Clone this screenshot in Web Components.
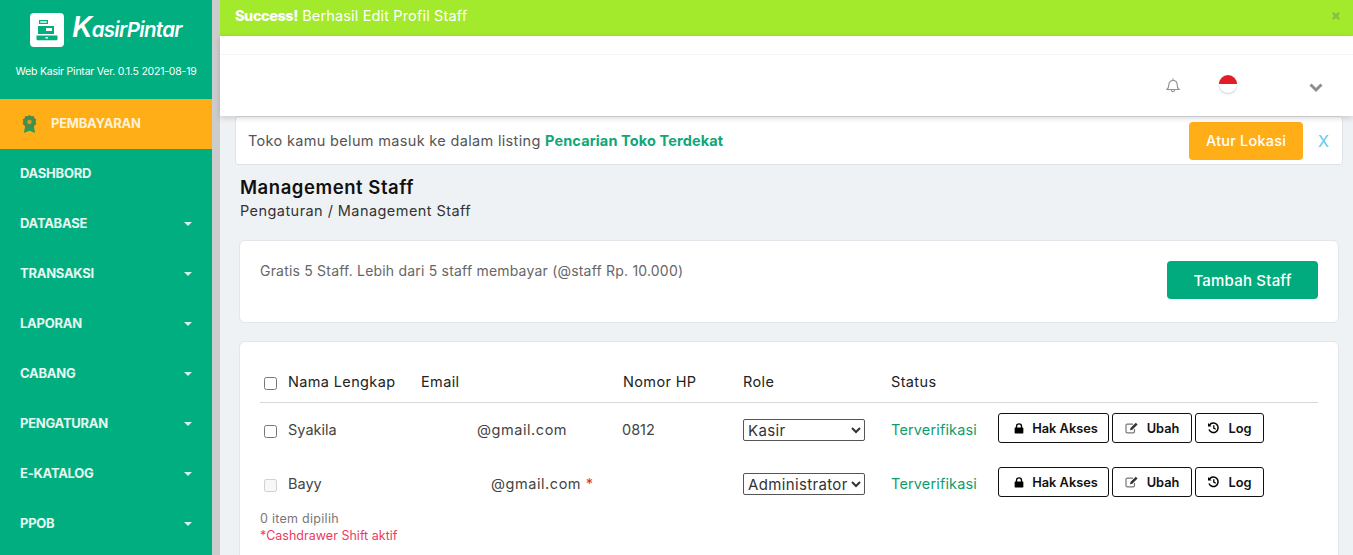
<!DOCTYPE html>
<html>
<head>
<meta charset="utf-8">
<title>Management Staff</title>
<style>
  html, body { margin: 0; height: 555px; overflow: hidden; background: #eff2f5; }
  body { font-family: Inter, "Open Sans", sans-serif; color: #222; }
</style>
</head>
<body>
<kp-app>
  <kp-sidebar slot="side">
    <kp-nav-item active label="PEMBAYARAN"></kp-nav-item>
    <kp-nav-item label="DASHBORD" plain></kp-nav-item>
    <kp-nav-item label="DATABASE"></kp-nav-item>
    <kp-nav-item label="TRANSAKSI"></kp-nav-item>
    <kp-nav-item label="LAPORAN"></kp-nav-item>
    <kp-nav-item label="CABANG"></kp-nav-item>
    <kp-nav-item label="PENGATURAN"></kp-nav-item>
    <kp-nav-item label="E-KATALOG"></kp-nav-item>
    <kp-nav-item label="PPOB"></kp-nav-item>
  </kp-sidebar>
  <kp-alert><b>Success!</b> Berhasil Edit Profil Staff</kp-alert>
  <kp-topbar></kp-topbar>
  <kp-notice>Toko kamu belum masuk ke dalam listing <b>Pencarian Toko Terdekat</b></kp-notice>
  <kp-heading title="Management Staff" crumb="Pengaturan / Management Staff"></kp-heading>
  <kp-card>
    <kp-info>Gratis 5 Staff. Lebih dari 5 staff membayar (@staff Rp. 10.000)</kp-info>
  </kp-card>
  <kp-card>
    <kp-staff-table>
      <kp-staff-row name="Syakila" email="@gmail.com" pad="56" phone="0812" role="Kasir"></kp-staff-row>
      <kp-staff-row name="Bayy" email="@gmail.com" pad="70" star disabled role="Administrator"></kp-staff-row>
    </kp-staff-table>
  </kp-card>
</kp-app>

<script>
  const icons = {
    lock: '<svg width="10" height="11" viewBox="0 0 11 12"><path fill="#000" d="M2 5V3.6a3.5 3.5 0 0 1 7 0V5h.6c.4 0 .7.3.7.7v5.1c0 .4-.3.7-.7.7H1.400c-.4 0-.7-.3-.7-.7V5.700c0-.4.3-.7.7-.7zm1.500 0h4V3.600a2 2 0 0 0-4 0z"/></svg>',
    edit: '<svg width="14" height="12" viewBox="0 0 14 12"><path fill="none" stroke="#777" stroke-width="1.200" d="M9.500 7v2.500c0 .8-.5 1.300-1.300 1.300H2.300c-.8 0-1.300-.5-1.300-1.300V3.500c0-.8.5-1.300 1.300-1.300H8"/><path fill="#333" d="M5 8.200l.5-2.200L10.800.8l1.800 1.800-5.300 5.200z"/></svg>',
    history: '<svg width="13" height="12" viewBox="0 0 13 12"><path fill="none" stroke="#000" stroke-width="1.500" d="M2.600 3A4.700 4.700 0 1 1 2 7.500"/><path fill="#000" d="M1 1l3.600 3.400H1z"/><path fill="none" stroke="#000" stroke-width="1.300" d="M6.800 3.300v2.800l1.900 1.100"/></svg>'
  };

  class KpApp extends HTMLElement {
    constructor() {
      super();
      this.attachShadow({ mode: 'open' });
      this.shadowRoot.innerHTML = `
        <style>
          :host { display: flex; width: 1353px; height: 555px; overflow: hidden; }
          main { flex: 1; min-width: 0; display: flex; flex-direction: column; }
        </style>
        <slot name="side"></slot>
        <main><slot></slot></main>
      `;
    }
  }

  class KpSidebar extends HTMLElement {
    constructor() {
      super();
      this.attachShadow({ mode: 'open' });
      this.shadowRoot.innerHTML = `
        <style>
          :host { display: block; flex: 0 0 212px; background: #01ae80; border-right: 8px solid #cccccc; color: #fff; }
          .brand { height: 99px; box-sizing: border-box; padding-top: 13px; }
          .logo { display: flex; align-items: center; margin-left: 30px; gap: 8px; height: 34px; }
          .tile { width: 34px; height: 34px; background: #fff; border-radius: 4px; display: flex; align-items: center; justify-content: center; }
          .word { font: italic 600 20.500px Inter, sans-serif; letter-spacing: -.7px; white-space: nowrap; margin-top: -1px; }
          .word i { font-size: 29px; line-height: 20px; }
          .ver { font: 400 10.500px Inter, sans-serif; text-align: center; margin-top: 18px; letter-spacing: -.22px; white-space: nowrap; }
        </style>
        <div class="brand">
          <div class="logo">
            <div class="tile">
              <svg width="22" height="22" viewBox="0 0 22 22" fill="#01ae80">
                <path d="M3 1h9v4H3zM4.200 2.200v1.600h6.600V2.200z" fill-rule="evenodd"/>
                <path d="M2 7h16v8H2zM10 9v3h6V9z" fill-rule="evenodd"/>
                <path d="M0.500 16.500h21v3.500c0 .8-.5 1.300-1.300 1.300H1.800c-.8 0-1.300-.5-1.300-1.300zm9 1.500v1.500h2.500V18z" fill-rule="evenodd"/>
              </svg>
            </div>
            <div class="word"><i>K</i>asirPintar</div>
          </div>
          <div class="ver">Web Kasir Pintar Ver. 0.1.5 2021-08-19</div>
        </div>
        <slot></slot>
      `;
    }
  }

  class KpNavItem extends HTMLElement {
    constructor() {
      super();
      this.attachShadow({ mode: 'open' });
    }

    connectedCallback() {
      const active = this.hasAttribute('active');
      const caret = !active && !this.hasAttribute('plain');
      this.shadowRoot.innerHTML = `
        <style>
          :host { display: flex; align-items: center; height: 50px; padding: 0 20px 2px; box-sizing: border-box;
            font: 700 13px Inter, sans-serif; letter-spacing: -.25px; color: #e4f7f0; }
          :host([active]) { background: #ffae18; color: #fff2d6; }
          .medal { margin: 2px 14px 0 2px; display: block; }
          .label { flex: 1; }
          .caret { width: 0; height: 0; border: 4px solid transparent; border-top-color: #d6f1e8; border-bottom: 0; margin: 1px 0 0 0; }
        </style>
        ${active ? `<svg class="medal" width="15" height="19" viewBox="0 0 15 19">
          <path fill="#2f9a58" d="M3.500 10L1.800 18l5.700-2.200 5.700 2.200L11.500 10z"/>
          <path fill="#4d8a48" d="M7.500 0l1.900 1.200 2.300-.1.800 2.100 1.800 1.400-.6 2.200.6 2.200-1.800 1.400-.8 2.100-2.300-.1-1.900 1.200-1.900-1.200-2.300.1-.8-2.100L.7 9l.6-2.200L.7 4.600l1.800-1.400.8-2.100 2.300.1z"/>
          <circle cx="7.500" cy="7" r="3.800" fill="none" stroke="#2f9a58" stroke-width="1"/>
          <circle cx="7.500" cy="7" r="2.300" fill="#d69b28"/>
        </svg>` : ''}
        <span class="label">${this.getAttribute('label')}</span>
        ${caret ? '<span class="caret"></span>' : ''}
      `;
    }
  }

  class KpAlert extends HTMLElement {
    constructor() {
      super();
      this.attachShadow({ mode: 'open' });
      this.shadowRoot.innerHTML = `
        <style>
          :host { display: flex; flex: none; align-items: center; height: 36px; box-sizing: border-box; background: #a3e92c; color: #fff; padding: 0 15px 5px; font-size: 14.500px; justify-content: space-between; letter-spacing: .15px; }
          .close { color: #88b846; font-weight: 700; font-size: 15px; margin-right: -3px; }
          ::slotted(b) { font-weight: 800; letter-spacing: -.45px; }
        </style>
        <span><slot></slot></span>
        <span class="close">×</span>
      `;
    }
  }

  class KpTopbar extends HTMLElement {
    constructor() {
      super();
      this.attachShadow({ mode: 'open' });
      this.shadowRoot.innerHTML = `
        <style>
          :host { display: block; position: relative; z-index: 1; flex: none; height: 80px; box-sizing: border-box; background: #fff; padding-top: 18px; box-shadow: 0 2px 6px rgba(0,0,0,.16); }
          .bar { height: 62px; border-top: 1px solid #f6f6f6; box-sizing: border-box; display: flex; align-items: center; padding: 0 30px 0 0; justify-content: flex-end; }
          .flag { width: 18px; height: 18px; border-radius: 50%; overflow: hidden; background: #fff; margin: 0 0 3px 0; box-shadow: 0 1px 2px rgba(0,0,0,.2); }
          .flag div { height: 9px; background: #e21d25; }
          svg { display: block; }
          .bell { margin: 0 39px 1px 0; }
          .chev { margin-left: 72px; margin-top: 5px; }
        </style>
        <div class="bar">
          <svg class="bell" width="14" height="16" viewBox="0 0 14 16" fill="none" stroke="#8c8f94" stroke-width="1.100">
            <path d="M1 12.500c1.200-1 1.800-2 1.800-4.500 0-2.600 1.800-4.500 4.200-4.500s4.200 1.900 4.200 4.500c0 2.500.6 3.500 1.800 4.500z"/>
            <path d="M7 3.500V1.500M5.500 13c0 1 .6 1.800 1.500 1.800s1.500-.8 1.500-1.800"/>
          </svg>
          <div class="flag"><div></div></div>
          <svg class="chev" width="14" height="10" viewBox="0 0 14 10" fill="none" stroke="#8b8e93" stroke-width="3"><path d="M1.500 1.500L7 7l5.500-5.500"/></svg>
        </div>
      `;
    }
  }

  class KpNotice extends HTMLElement {
    constructor() {
      super();
      this.attachShadow({ mode: 'open' });
      this.shadowRoot.innerHTML = `
        <style>
          :host { display: flex; flex: none; align-items: center; height: 49px; box-sizing: border-box; margin: 0 10px 0 15px; background: #fff; border: 1px solid #dfe2e6; border-radius: 3px; padding: 0 12px; font-size: 14.500px; color: #555; letter-spacing: .33px; }
          .text { flex: 1; }
          ::slotted(b) { color: #0fa678; font-weight: 700; letter-spacing: .12px; }
          button { all: unset; background: #ffae18; color: #fff; width: 114px; height: 38px; border-radius: 4px; text-align: center; font-size: 14.500px; font-weight: 500; letter-spacing: .2px; margin-left: 1px; }
          .x { color: #62c8ee; font-size: 16px; margin: 0 0 0 15px; width: 12px; letter-spacing: 0; }
        </style>
        <span class="text"><slot></slot></span>
        <button>Atur Lokasi</button>
        <span class="x">X</span>
      `;
    }
  }

  class KpHeading extends HTMLElement {
    constructor() {
      super();
      this.attachShadow({ mode: 'open' });
    }

    connectedCallback() {
      this.shadowRoot.innerHTML = `
        <style>
          :host { display: block; flex: none; padding: 10px 20px 0; height: 75px; box-sizing: border-box; color: #111; }
          h1 { margin: 0; font-size: 18.500px; line-height: 24px; font-weight: 600; letter-spacing: .55px; }
          p { margin: 2px 0 0; font-size: 14.500px; line-height: 20px; color: #333; letter-spacing: .44px; }
        </style>
        <h1>${this.getAttribute('title')}</h1>
        <p>${this.getAttribute('crumb')}</p>
      `;
    }
  }

  class KpCard extends HTMLElement {
    constructor() {
      super();
      this.attachShadow({ mode: 'open' });
      this.shadowRoot.innerHTML = `
        <style>
          :host { display: block; margin: 0 14px 18px 19px; background: #fff; border: 1px solid #e2e5e9; border-radius: 6px; padding: 20px; flex: none; }
        </style>
        <slot></slot>
      `;
    }
  }

  class KpInfo extends HTMLElement {
    constructor() {
      super();
      this.attachShadow({ mode: 'open' });
      this.shadowRoot.innerHTML = `
        <style>
          :host { display: flex; justify-content: space-between; height: 41px; font-size: 14px; color: #666; letter-spacing: .2px; }
          button { all: unset; background: #01ab7e; color: #fff; width: 151px; height: 38px; border-radius: 4px; text-align: center; font-size: 15px; font-weight: 500; }
          span { line-height: 20px; }
        </style>
        <span><slot></slot></span>
        <button>Tambah Staff</button>
      `;
    }
  }

  class KpStaffTable extends HTMLElement {
    constructor() {
      super();
      this.attachShadow({ mode: 'open' });
      this.shadowRoot.innerHTML = `
        <style>
          :host { display: block; height: 193px; font-size: 14.500px; }
          .head { display: grid; grid-template-columns: 28px 133px 202px 120px 148px 1fr; align-items: center; border-bottom: 1px solid #d8d8d8; box-sizing: border-box; height: 41px; color: #222; letter-spacing: .36px; padding-bottom: 2px; }
          input { margin: 5px 0 0 4px; width: 13px; height: 13px; }
          .foot { font-size: 12.500px; line-height: 17px; color: #777; margin-top: -1px; letter-spacing: .28px; }
          .foot div + div { color: #ee3a5e; letter-spacing: .02px; }
        </style>
        <div class="head">
          <input type="checkbox">
          <span>Nama Lengkap</span>
          <span>Email</span>
          <span>Nomor HP</span>
          <span>Role</span>
          <span>Status</span>
        </div>
        <slot></slot>
        <div class="foot">
          <div>0 item dipilih</div>
          <div>*Cashdrawer Shift aktif</div>
        </div>
      `;
    }
  }

  class KpStaffRow extends HTMLElement {
    constructor() {
      super();
      this.attachShadow({ mode: 'open' });
    }

    connectedCallback() {
      const role = this.getAttribute('role');
      const disabled = this.hasAttribute('disabled') ? 'disabled' : '';
      this.shadowRoot.innerHTML = `
        <style>
          :host { display: grid; grid-template-columns: 28px 133px 201px 120px 149px 107px 1fr; align-items: center; height: 54px; color: #444; font-size: 14.500px; }
          input { margin: 2px 0 0 4px; width: 13px; height: 13px; }
          .t { margin-top: -2px; }
          .mail { letter-spacing: .55px; }
          .star { color: #e5342f; }
          select { width: 122px; height: 22px; font: 15px Inter, sans-serif; letter-spacing: .35px; color: #333; background: #fff; border: 1px solid #555; border-radius: 2px; padding: 0; margin-left: 1px; display: block; }
          .ok { color: #129c6c; letter-spacing: .15px; }
          .actions { display: flex; gap: 3px; margin-top: -4px; }
        </style>
        <input type="checkbox" ${disabled}>
        <span class="t">${this.getAttribute('name')}</span>
        <span class="t mail" style="padding-left:${this.getAttribute('pad')}px">${this.getAttribute('email')}${this.hasAttribute('star') ? ' <span class="star">*</span>' : ''}</span>
        <span class="t">${this.getAttribute('phone') || ''}</span>
        <span><select><option>${role}</option></select></span>
        <span class="t ok">Terverifikasi</span>
        <span class="actions">
          <kp-action icon="lock" w="111" style="padding-left:5px">Hak Akses</kp-action>
          <kp-action icon="edit" w="80">Ubah</kp-action>
          <kp-action icon="history" w="69">Log</kp-action>
        </span>
      `;
    }
  }

  class KpAction extends HTMLElement {
    constructor() {
      super();
      this.attachShadow({ mode: 'open' });
    }

    connectedCallback() {
      this.shadowRoot.innerHTML = `
        <style>
          :host { display: inline-flex; align-items: center; justify-content: center; gap: 8px; height: 30px; box-sizing: border-box; width: ${this.getAttribute('w')}px;
            border: 1px solid #111; border-radius: 3px; font-size: 12.800px; font-weight: 600; color: #111; background: #fff; }
          svg { display: block; }
        </style>
        ${icons[this.getAttribute('icon')]}
        <slot></slot>
      `;
    }
  }

  customElements.define('kp-app', KpApp);
  customElements.define('kp-sidebar', KpSidebar);
  customElements.define('kp-nav-item', KpNavItem);
  customElements.define('kp-alert', KpAlert);
  customElements.define('kp-topbar', KpTopbar);
  customElements.define('kp-notice', KpNotice);
  customElements.define('kp-heading', KpHeading);
  customElements.define('kp-card', KpCard);
  customElements.define('kp-info', KpInfo);
  customElements.define('kp-staff-table', KpStaffTable);
  customElements.define('kp-staff-row', KpStaffRow);
  customElements.define('kp-action', KpAction);
</script>
</body>
</html>
